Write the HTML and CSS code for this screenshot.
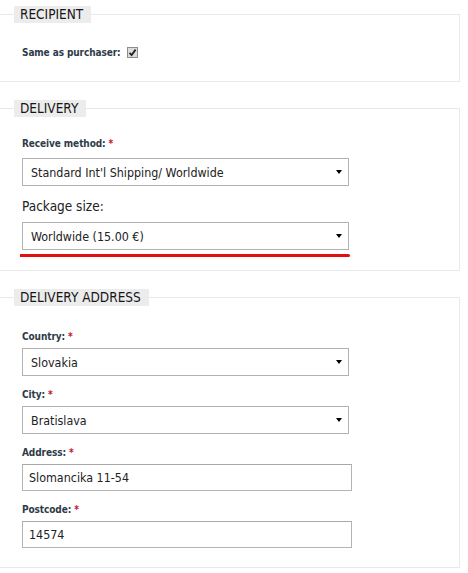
FILE: index.html
```html
<!DOCTYPE html>
<html lang="en">
<head>
  <meta charset="UTF-8" />
  <meta name="viewport" content="width=device-width, initial-scale=1" />
  <title>Checkout - Delivery</title>
  <link rel="stylesheet" href="styles.css">
</head>
<body>

<div class="page">

  <fieldset class="section recipient">
    <legend>RECIPIENT</legend>
    <div class="check-row">
      <span class="label">Same as purchaser:</span>
      <span class="checkbox">
        <svg width="9" height="9" viewBox="0 0 9 9"><path d="M1.5 4.8 L3.6 7 L7.6 1.6" fill="none" stroke="#222" stroke-width="1.8"/></svg>
      </span>
    </div>
  </fieldset>

  <fieldset class="section delivery">
    <legend>DELIVERY</legend>
    <div class="field">
      <label class="label" for="method">Receive method: <span class="req">*</span></label>
      <div class="select">
        <select id="method">
          <option>Standard Int'l Shipping/ Worldwide</option>
        </select>
      </div>
    </div>
    <div class="field">
      <label class="label-big" for="size">Package size:</label>
      <div class="select">
        <select id="size">
          <option>Worldwide (15.00 €)</option>
        </select>
      </div>
      <div class="mark"></div>
    </div>
  </fieldset>

  <fieldset class="section address">
    <legend>DELIVERY ADDRESS</legend>
    <div class="field">
      <label class="label" for="country">Country: <span class="req">*</span></label>
      <div class="select">
        <select id="country">
          <option>Slovakia</option>
        </select>
      </div>
    </div>
    <div class="field">
      <label class="label" for="city">City: <span class="req">*</span></label>
      <div class="select">
        <select id="city">
          <option>Bratislava</option>
        </select>
      </div>
    </div>
    <div class="field">
      <label class="label" for="address">Address: <span class="req">*</span></label>
      <input type="text" id="address" value="Slomancika 11-54" />
    </div>
    <div class="field">
      <label class="label" for="postcode">Postcode: <span class="req">*</span></label>
      <input type="text" id="postcode" value="14574" />
    </div>
  </fieldset>

</div>

</body>
</html>
```

FILE: styles.css
```css
body {
  margin: 0;
  background: #fff;
  font-family: "DejaVu Sans Condensed", "DejaVu Sans", sans-serif;
  color: #222;
  overflow: hidden;
}
.page {
  padding-top: 6px;
}
.section {
  margin: 0 8px 18px -10px;
  border: 1px solid #e9e9e9;
  min-width: 0;
}
.recipient {
  padding: 23px 0 21px 31px;
}
.delivery {
  padding: 20px 0 13px 31px;
}
.address {
  padding: 24px 0 19px 31px;
}
legend {
  margin-left: -8px;
  padding: 0 8px 0 6px;
  height: 17px;
  line-height: 17px;
  background: #ececec;
  font-size: 13.5px;
  color: #161616;
}
.label {
  display: block;
  font-size: 10px;
  font-weight: bold;
  line-height: 14px;
  color: #2e3b48;
  margin-bottom: 4px;
  letter-spacing: -0.1px;
}
.delivery .label {
  margin-bottom: 7px;
}
.req {
  color: #c8102e;
}
.label-big {
  display: block;
  font-size: 13.5px;
  line-height: 16px;
  color: #222;
  margin-top: 9px;
  margin-bottom: 8px;
}
.check-row {
  display: flex;
  align-items: center;
  gap: 6px;
}
.check-row .label {
  margin: 0;
}
.checkbox {
  display: flex;
  align-items: center;
  justify-content: center;
  width: 9px;
  height: 9px;
  border: 1px solid #8c8c8c;
  background: #dcdcdc;
  margin-top: -2px;
}
.field {
  margin-bottom: 12px;
}
.field:last-child {
  margin-bottom: 0;
}
.select {
  position: relative;
  width: 327px;
}
.select::after {
  content: "";
  position: absolute;
  right: 7px;
  top: 12px;
  border-left: 3px solid transparent;
  border-right: 3px solid transparent;
  border-top: 4px solid #000;
}
select {
  appearance: none;
  -webkit-appearance: none;
  display: block;
  width: 100%;
  height: 28px;
  margin: 0;
  padding: 0 8px;
  border: 1px solid #b2b2b2;
  border-radius: 0;
  background: #fff;
  font-family: inherit;
  font-size: 12.4px;
  color: #222;
}
input {
  display: block;
  box-sizing: border-box;
  width: 330px;
  height: 27px;
  margin: 0;
  padding: 0 6px;
  border: 1px solid #b4b4b4;
  border-top-color: #a8a8a8;
  font-family: inherit;
  font-size: 12.4px;
  color: #222;
}
.mark {
  width: 330px;
  height: 3px;
  margin: 4px 0 0 -2px;
  background: #e01010;
  border-radius: 0 2px 2px 0;
}
```
